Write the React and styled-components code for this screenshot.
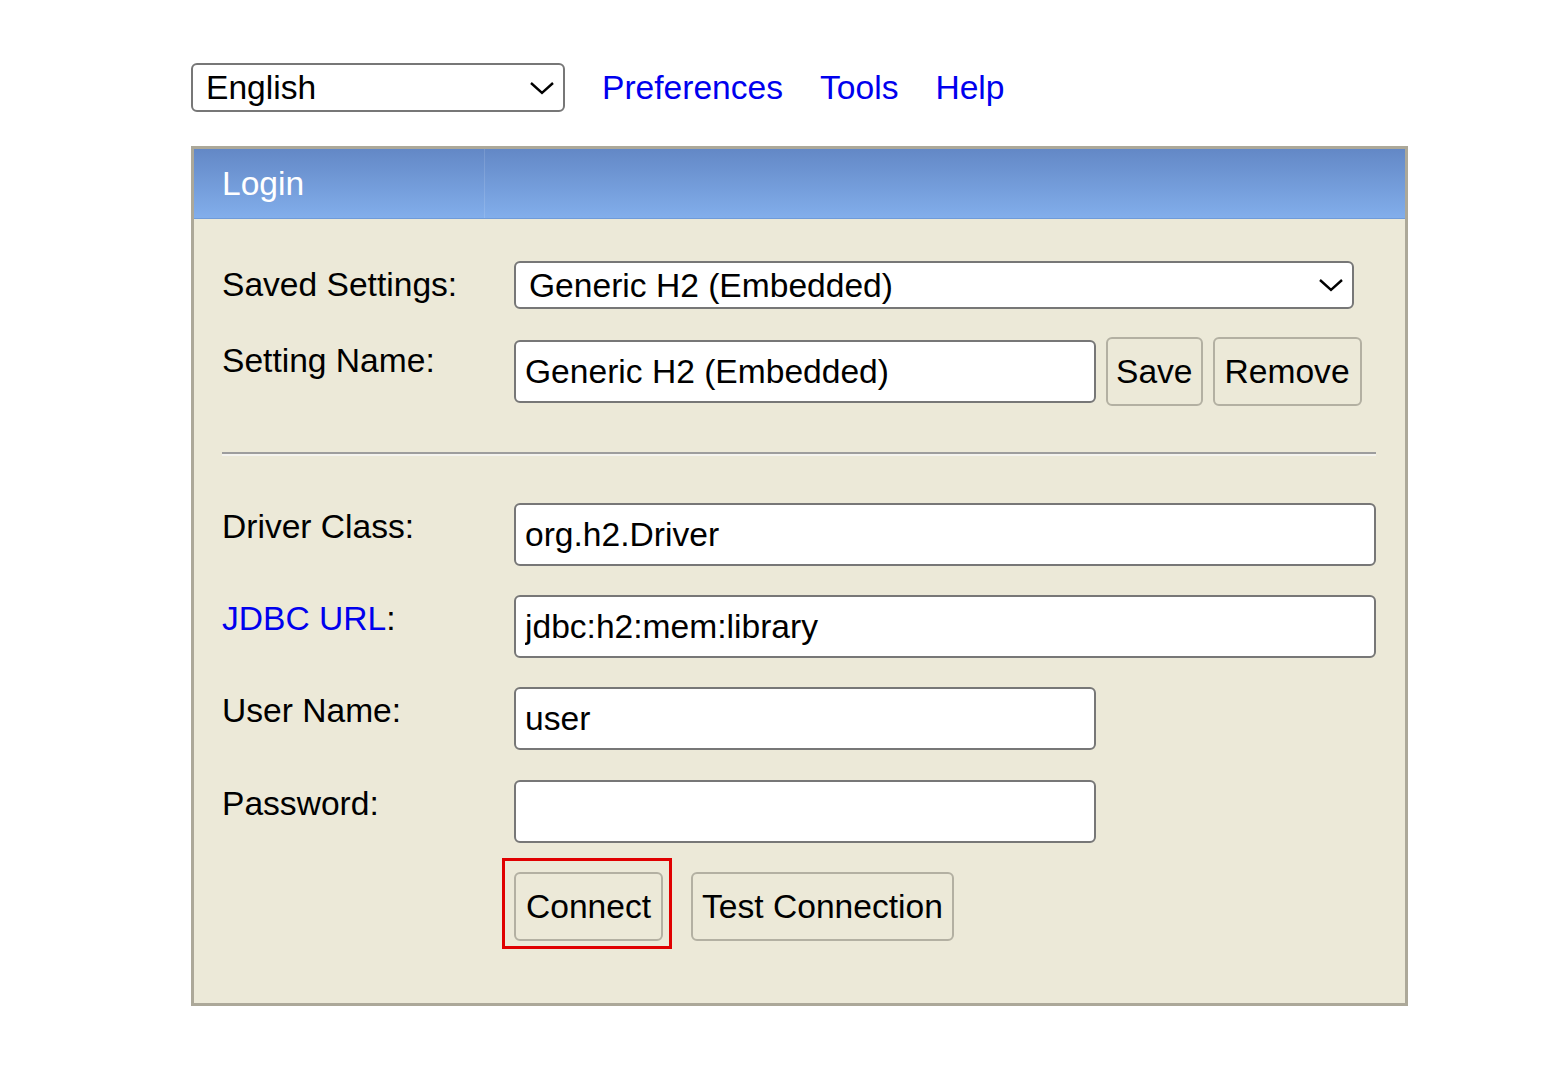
import React from "react"
import styled, { createGlobalStyle } from "styled-components"

const GlobalStyle = createGlobalStyle`
  html, body {
    margin: 0;
    padding: 0;
    background: #ffffff;
  }
  body {
    font-family: "Liberation Sans", Arial, sans-serif;
    font-size: 33.6px;
    color: #000;
  }
`

const Page = styled.div`
  padding: 63px 0 0 191px;
`

const TopBar = styled.div`
  display: flex;
  align-items: center;
  gap: 37px;
  height: 49px;
`

const SelectWrap = styled.div`
  position: relative;
  width: ${(p) => p.width}px;
  height: ${(p) => p.height}px;
`

const Select = styled.select`
  appearance: none;
  -webkit-appearance: none;
  box-sizing: border-box;
  width: 100%;
  height: 100%;
  margin: 0;
  padding: 0 0 0 ${(p) => p.padLeft || 13}px;
  border: 2px solid #777;
  border-radius: 6px;
  background: #fff;
  font-family: inherit;
  font-size: 33.6px;
  color: #000;
`

const Chevron = styled.svg`
  position: absolute;
  right: ${(p) => p.right}px;
  top: 50%;
  transform: translateY(-50%);
  pointer-events: none;
`

const NavLink = styled.a`
  color: #0000ee;
  text-decoration: none;
  font-size: 33.6px;
  padding-top: 1px;
`

const Panel = styled.div`
  box-sizing: border-box;
  width: 1217px;
  margin-top: 34px;
  border: 3px solid #aca899;
  background: #ece9d8;
`

const Header = styled.div`
  display: flex;
  height: 69px;
  background: linear-gradient(to bottom, #6388c6, #82aeeb);
  border-bottom: 1px solid #6f9bd9;
`

const HeaderCell = styled.div`
  display: flex;
  align-items: center;
  width: 291px;
  padding-left: 28px;
  box-sizing: border-box;
  color: #fff;
  border-right: 1px solid rgba(255, 255, 255, 0.12);
`

const Body = styled.div`
  padding: 42px 29px 62px 28px;
`

const Row = styled.div`
  display: grid;
  grid-template-columns: 292px 1fr;
  align-items: start;
  margin-top: ${(p) => p.gap || 0}px;
`

const Label = styled.div`
  padding-top: ${(p) => p.offset || 5}px;
  line-height: 38px;
  color: ${(p) => (p.link ? "#0000ee" : "#000")};
`

const Colon = styled.span`
  color: #000;
`

const Field = styled.div`
  display: flex;
  align-items: center;
  gap: 10px;
`

const Input = styled.input`
  box-sizing: border-box;
  width: ${(p) => (p.short ? "582px" : "100%")};
  height: 63px;
  margin: 0;
  padding: 0 9px;
  border: 2px solid #777;
  border-radius: 6px;
  background: #fff;
  font-family: inherit;
  font-size: 33.6px;
  color: #000;
  outline: none;
`

const Button = styled.button`
  box-sizing: border-box;
  height: 69px;
  margin: 0;
  padding: 0 ${(p) => p.pad || 10}px;
  border: 2px solid #b3b0a2;
  border-radius: 6px;
  background: #ece9d8;
  font-family: inherit;
  font-size: 33.6px;
  color: #000;
`

const Divider = styled.hr`
  margin: 46px 0 47px;
  height: 0;
  border: none;
  border-top: 2px solid #9d9d9d;
  border-bottom: 2px solid #f4f3ee;
`

const ButtonBar = styled.div`
  display: flex;
  gap: 28px;
`

const Highlight = styled.div`
  position: relative;

  &::after {
    content: "";
    position: absolute;
    left: -12px;
    top: -14px;
    right: -9px;
    bottom: -8px;
    border: 3px solid #e00000;
    pointer-events: none;
  }
`

const ChevronIcon = ({ right }) => (
  <Chevron right={right} width="26" height="14" viewBox="0 0 26 14">
    <path d="M2 2 L13 12 L24 2" fill="none" stroke="#000" strokeWidth="2.4" />
  </Chevron>
)

const fields = [
  { label: "Driver Class", value: "org.h2.Driver", gap: 0 },
  { label: "JDBC URL", value: "jdbc:h2:mem:library", gap: 29, link: true },
  { label: "User Name", value: "user", gap: 29, short: true },
  { label: "Password", value: "", gap: 30, short: true, type: "password" },
]

export default function App() {
  return (
    <>
      <GlobalStyle />
      <Page>
        <TopBar>
          <SelectWrap width={374} height={49}>
            <Select padLeft={13} defaultValue="en">
              <option value="en">English</option>
            </Select>
            <ChevronIcon right={10} />
          </SelectWrap>
          <NavLink href="#">Preferences</NavLink>
          <NavLink href="#">Tools</NavLink>
          <NavLink href="#">Help</NavLink>
        </TopBar>

        <Panel>
          <Header>
            <HeaderCell>Login</HeaderCell>
          </Header>
          <Body>
            <Row>
              <Label offset={5}>Saved Settings:</Label>
              <SelectWrap width={840} height={48}>
                <Select padLeft={13} defaultValue="h2">
                  <option value="h2">Generic H2 (Embedded)</option>
                </Select>
                <ChevronIcon right={10} />
              </SelectWrap>
            </Row>

            <Row gap={28}>
              <Label offset={5}>Setting Name:</Label>
              <Field>
                <Input short defaultValue="Generic H2 (Embedded)" />
                <Button pad={8}>Save</Button>
                <Button pad={10}>Remove</Button>
              </Field>
            </Row>

            <Divider />

            {fields.map((f) => (
              <Row key={f.label} gap={f.gap}>
                <Label link={f.link}>
                  {f.label}
                  <Colon>:</Colon>
                </Label>
                <Field>
                  <Input short={f.short} type={f.type || "text"} defaultValue={f.value} />
                </Field>
              </Row>
            ))}

            <Row gap={29}>
              <div />
              <ButtonBar>
                <Highlight>
                  <Button pad={10}>Connect</Button>
                </Highlight>
                <Button pad={9}>Test Connection</Button>
              </ButtonBar>
            </Row>
          </Body>
        </Panel>
      </Page>
    </>
  )
}
